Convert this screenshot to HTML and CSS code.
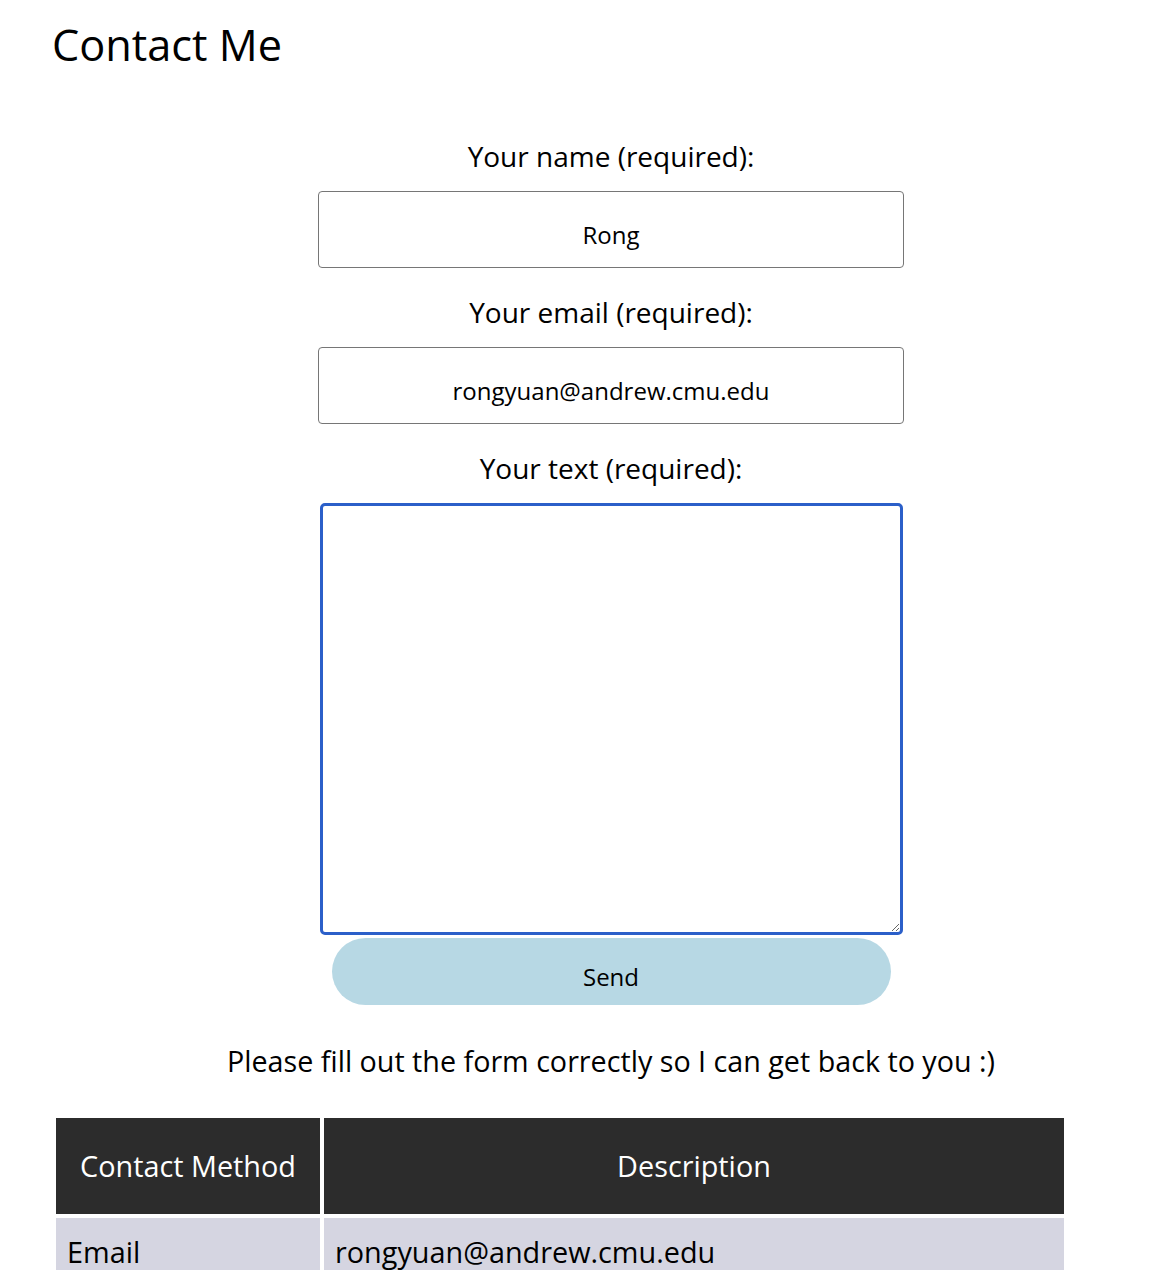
FILE: index.html
```html
<!DOCTYPE html>
<html lang="en">
<head>
<meta charset="utf-8">
<title>Contact Me</title>
<link rel="stylesheet" href="styles.css">
</head>
<body>
<main class="page">
  <h1 class="title">Contact Me</h1>
  <form class="contact-form">
    <label class="field-label" for="name">Your name (required):</label>
    <input class="field-input" id="name" type="text" value="Rong">
    <label class="field-label" for="email">Your email (required):</label>
    <input class="field-input" id="email" type="email" value="rongyuan@andrew.cmu.edu">
    <label class="field-label" for="msg">Your text (required):</label>
    <textarea class="field-text" id="msg"></textarea>
    <button class="send-btn" type="button">Send</button>
  </form>
  <p class="note">Please fill out the form correctly so I can get back to you :)</p>
  <table class="methods">
    <thead>
      <tr><th class="col-method">Contact Method</th><th class="col-desc">Description</th></tr>
    </thead>
    <tbody>
      <tr><td>Email</td><td>rongyuan@andrew.cmu.edu</td></tr>
    </tbody>
  </table>
</main>
</body>
</html>
```
FILE: styles.css
```css
html, body {
  margin: 0;
  padding: 0;
  background: #ffffff;
}
body {
  font-family: "Open Sans", "Noto Sans", sans-serif;
  color: #000000;
}
.page {
  padding-left: 52px;
  padding-top: 17px;
}
.title {
  margin: 0;
  font-size: 43.3px;
  line-height: 55px;
  font-weight: 400;
}
.contact-form {
  display: flex;
  flex-direction: column;
  align-items: center;
  margin-top: 67px;
}
.field-label {
  display: block;
  font-size: 28px;
  line-height: 34px;
  margin-bottom: 18px;
}
.field-input + .field-label {
  margin-top: 27px;
}
.field-input {
  box-sizing: border-box;
  width: 586px;
  height: 77px;
  margin: 0;
  padding: 10px 10px 0;
  border: 1px solid #767676;
  border-radius: 4px;
  font-family: inherit;
  font-size: 24px;
  color: #000;
  text-align: center;
  background: #fff;
}
.field-text {
  box-sizing: border-box;
  width: 583px;
  height: 432px;
  margin: 0;
  padding: 4px;
  border: 3px solid #2b5fc9;
  border-radius: 5px;
  outline: none;
  font-family: inherit;
  font-size: 24px;
  background: #fff;
}
.send-btn {
  box-sizing: border-box;
  width: 559px;
  height: 67px;
  margin-top: 3px;
  padding: 10px 0 0;
  border: none;
  border-radius: 34px;
  background: #b7d8e4;
  font-family: inherit;
  font-size: 24px;
  color: #000;
}
.note {
  margin: 35px 0 0;
  font-size: 28.7px;
  line-height: 41px;
  text-align: center;
}
.methods {
  margin-top: 33px;
  border-spacing: 4px;
  width: 1016px;
  font-size: 28.8px;
  line-height: 40px;
}
.methods th {
  background: #2c2c2c;
  color: #ffffff;
  font-weight: 400;
  padding: 28px 10px;
  text-align: center;
}
.col-method {
  width: 244px;
}
.methods td {
  background: #d5d5e1;
  padding: 14px 11px;
  text-align: left;
}
```
